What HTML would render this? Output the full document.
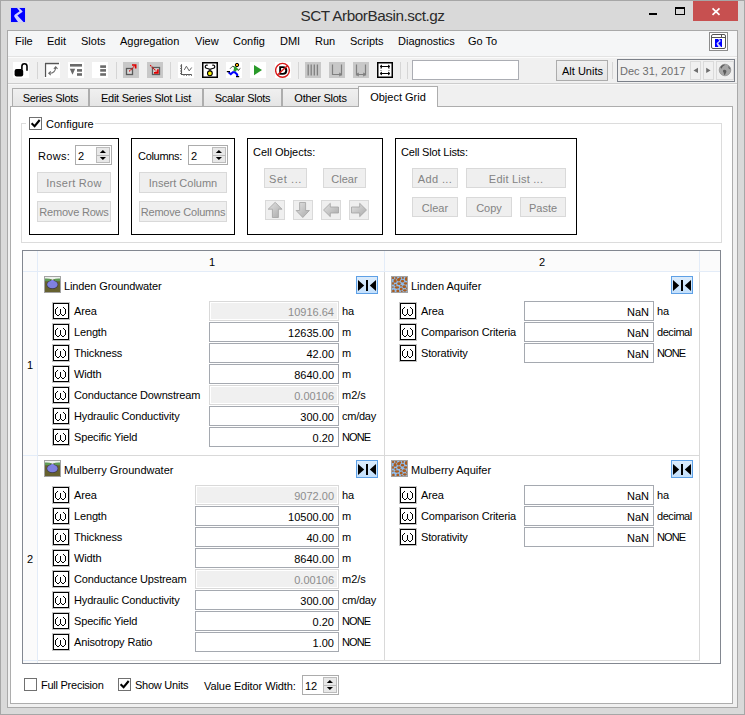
<!DOCTYPE html>
<html><head><meta charset="utf-8"><style>
html,body{margin:0;padding:0}
body{width:745px;height:715px;position:relative;overflow:hidden;font-family:"Liberation Sans", sans-serif;font-size:11px}
.t{position:absolute;white-space:pre;line-height:13px;font-size:11px}
.g{letter-spacing:-0.15px}
</style></head><body>
<div style="position:absolute;left:0px;top:0px;width:745px;height:715px;box-sizing:border-box;background:#d9d9d9;border:1px solid #a6a6a6"></div>
<svg style="position:absolute;left:10px;top:7px" width="16" height="16" viewBox="-1 -1 16 16">
<rect x="-0.5" y="-0.5" width="15" height="15" fill="#c8c8f0"/><rect width="14" height="14" fill="#0000ff"/>
<path d="M6 0 L8.2 0 L11.5 3.2 Q11.8 3.8 11 4.3 L6.4 7.6 L12.5 14 L7 14 L3.3 8.8 Q2.8 7.5 4 6.5 L8.6 3.2 Z" fill="#d2d2ff"/>
</svg>
<div class="t" style="left:0;width:745px;text-align:center;top:5.9px;font-size:15.3px;line-height:19px;color:#2b2b2b;letter-spacing:-0.45px;padding-left:0px">SCT ArborBasin.sct.gz</div>
<div style="position:absolute;left:649px;top:13px;width:8px;height:2px;box-sizing:border-box;background:#000"></div>
<div style="position:absolute;left:675px;top:7px;width:10px;height:8px;box-sizing:border-box;border:1px solid #000;border-top-width:2px"></div>
<div style="position:absolute;left:693px;top:1px;width:45px;height:20px;box-sizing:border-box;background:#c75050"></div>
<svg style="position:absolute;left:711px;top:7px" width="10" height="9" viewBox="0 0 10 9">
<path d="M1.5 1.3 L8.5 7.8 M8.5 1.3 L1.5 7.8" stroke="#fff" stroke-width="1.7"/></svg>
<div style="position:absolute;left:7px;top:30px;width:731px;height:678px;box-sizing:border-box;background:#f0f0f0;border:1px solid #a9a9a9"></div>
<div style="position:absolute;left:8px;top:31px;width:729px;height:25px;box-sizing:border-box;background:#f5f6f7"></div>
<div style="position:absolute;left:8px;top:56px;width:729px;height:1px;box-sizing:border-box;background:#e3e3e3"></div>
<div class="t " style="left:15px;top:35px;color:#000;">File</div>
<div class="t " style="left:47px;top:35px;color:#000;">Edit</div>
<div class="t " style="left:81px;top:35px;color:#000;">Slots</div>
<div class="t " style="left:120px;top:35px;color:#000;">Aggregation</div>
<div class="t " style="left:195px;top:35px;color:#000;">View</div>
<div class="t " style="left:233px;top:35px;color:#000;">Config</div>
<div class="t " style="left:280px;top:35px;color:#000;">DMI</div>
<div class="t " style="left:315px;top:35px;color:#000;">Run</div>
<div class="t " style="left:350px;top:35px;color:#000;">Scripts</div>
<div class="t " style="left:398px;top:35px;color:#000;">Diagnostics</div>
<div class="t " style="left:468px;top:35px;color:#000;">Go To</div>
<div style="position:absolute;left:709px;top:32px;width:19px;height:19px;box-sizing:border-box;background:#fff;border:1px solid #8c8c8c"></div>
<div style="position:absolute;left:711px;top:34px;width:15px;height:15px;box-sizing:border-box;background:#fff;border:1px solid #555;border-radius:2px"></div>
<div style="position:absolute;left:712px;top:37px;width:13px;height:1px;box-sizing:border-box;background:#555"></div>
<div style="position:absolute;left:721px;top:35px;width:1px;height:2px;box-sizing:border-box;background:#555"></div>
<svg style="position:absolute;left:715px;top:39px" width="7" height="8" viewBox="0 0 14 14" preserveAspectRatio="none"><rect width="14" height="14" fill="#0000ff"/><path d="M6 0 L8.2 0 L11.5 3.2 Q11.8 3.8 11 4.3 L6.4 7.6 L12.5 14 L7 14 L3.3 8.8 Q2.8 7.5 4 6.5 L8.6 3.2 Z" fill="#d2d2ff"/></svg>
<div style="position:absolute;left:8px;top:57px;width:729px;height:1px;box-sizing:border-box;background:#fbfbfb"></div>
<div style="position:absolute;left:8px;top:83px;width:729px;height:1px;box-sizing:border-box;background:#cdcdcd"></div>
<div style="position:absolute;left:8px;top:84px;width:729px;height:1px;box-sizing:border-box;background:#f8f8f8"></div>
<div style="position:absolute;left:13px;top:62px;width:16px;height:16px;box-sizing:border-box;background:#fff"></div>
<svg style="position:absolute;left:13px;top:62px" width="16" height="16" viewBox="0 0 16 16">
<rect x="1.6" y="7" width="8.6" height="7.6" rx="2" fill="#000"/>
<path d="M8.9 7.5 V4.3 A2.55 2.55 0 0 1 14 4.3 V8.8" stroke="#000" stroke-width="1.6" fill="none"/></svg>
<div style="position:absolute;left:37px;top:62px;width:1px;height:17px;box-sizing:border-box;background:#d5d5d5"></div>
<div style="position:absolute;left:116px;top:62px;width:1px;height:17px;box-sizing:border-box;background:#d5d5d5"></div>
<div style="position:absolute;left:170px;top:62px;width:1px;height:17px;box-sizing:border-box;background:#d5d5d5"></div>
<div style="position:absolute;left:298px;top:62px;width:1px;height:17px;box-sizing:border-box;background:#d5d5d5"></div>
<div style="position:absolute;left:400px;top:62px;width:1px;height:17px;box-sizing:border-box;background:#d5d5d5"></div>
<div style="position:absolute;left:407px;top:62px;width:1px;height:17px;box-sizing:border-box;background:#d5d5d5"></div>
<div style="position:absolute;left:612px;top:62px;width:1px;height:17px;box-sizing:border-box;background:#d5d5d5"></div>
<div style="position:absolute;left:44px;top:62px;width:16px;height:16px;box-sizing:border-box;background:#fff"></div>
<svg style="position:absolute;left:44px;top:62px" width="16" height="16" viewBox="0 0 16 16">
<path d="M1.5 15 V1.5 H15" stroke="#555" stroke-width="1.3" fill="none"/>
<path d="M5 11.3 Q11.5 11.5 11.7 5" stroke="#6a6a6a" stroke-width="1.1" fill="none"/>
<path d="M6.8 9.5 L4.8 11.3 L6.8 13.1 M9.9 6.8 L11.7 4.8 L13.5 6.8" stroke="#6a6a6a" stroke-width="1.1" fill="none"/></svg>
<div style="position:absolute;left:68px;top:62px;width:16px;height:16px;box-sizing:border-box;background:#fff"></div>
<svg style="position:absolute;left:68px;top:62px" width="16" height="16" viewBox="0 0 16 16">
<rect x="2" y="2" width="12" height="2.6" fill="#6a6a6a"/><path d="M1.8 6.7 H7.2 L4.5 12.8 Z" fill="#6a6a6a"/>
<rect x="9" y="7.1" width="5" height="2.6" fill="#6a6a6a"/><rect x="9" y="11.2" width="5" height="2.6" fill="#6a6a6a"/></svg>
<div style="position:absolute;left:92px;top:62px;width:16px;height:16px;box-sizing:border-box;background:#fff"></div>
<svg style="position:absolute;left:92px;top:62px" width="16" height="16" viewBox="0 0 16 16">
<rect x="8.2" y="3.3" width="5.8" height="2.6" fill="#6a6a6a"/><rect x="8.2" y="7.1" width="5.8" height="2.6" fill="#6a6a6a"/><rect x="8.2" y="11.2" width="5.8" height="2.6" fill="#6a6a6a"/></svg>
<div style="position:absolute;left:123px;top:62px;width:16px;height:16px;box-sizing:border-box;background:#c8c8c8"></div>
<svg style="position:absolute;left:123px;top:62px" width="16" height="16" viewBox="0 0 16 16">
<rect x="3.5" y="6.5" width="6" height="6" stroke="#5a5a5a" stroke-width="1.3" fill="#d8d8d8"/>
<path d="M6.3 9.4 L12.3 3.4" stroke="#e00000" stroke-width="1.1" stroke-dasharray="1.3 0.6" fill="none"/>
<path d="M9 3 H12.7 V6.6" stroke="#e00000" stroke-width="1.6" fill="none"/></svg>
<div style="position:absolute;left:147px;top:62px;width:16px;height:16px;box-sizing:border-box;background:#c8c8c8"></div>
<svg style="position:absolute;left:147px;top:62px" width="16" height="16" viewBox="0 0 16 16">
<rect x="5.5" y="5.5" width="7" height="7" stroke="#5a5a5a" stroke-width="1.3" fill="#d8d8d8"/>
<path d="M3.2 3.2 L10.4 10.4" stroke="#e00000" stroke-width="1.1" stroke-dasharray="1.3 0.6" fill="none"/>
<path d="M7 10.9 H10.9 V7.3" stroke="#e00000" stroke-width="1.6" fill="none"/></svg>
<div style="position:absolute;left:178px;top:62px;width:16px;height:16px;box-sizing:border-box;background:#fff"></div>
<svg style="position:absolute;left:178px;top:62px" width="16" height="16" viewBox="0 0 16 16">
<path d="M3.5 2.3 V12.5 H13.7" stroke="#555" stroke-width="1.1" fill="none"/>
<path d="M2 4 H3.5 M2 6.5 H3.5 M2 9 H3.5 M2 11.5 H3.5 M6 12.5 V14 M8.5 12.5 V14 M11 12.5 V14 M13.5 12.5 V14" stroke="#777" stroke-width="1"/>
<path d="M6.3 7.9 L8.4 4.2 L11.2 8.9 L13.7 5.5" stroke="#666" stroke-width="1" fill="none"/></svg>
<svg style="position:absolute;left:202px;top:62px" width="16" height="16" viewBox="0 0 16 16">
<rect x="0.75" y="0.75" width="14.5" height="14.5" stroke="#000" stroke-width="1.5" fill="#fff"/>
<path d="M5.5 6.5 Q3 6.3 3.3 4.3 Q3.8 2.6 5.8 3.3 M10.5 6.5 Q13 6.3 12.7 4.3 Q12.2 2.6 10.2 3.3 M5.5 6.5 L8 7.4 L10.5 6.5 M8 7.4 V9" stroke="#000" stroke-width="1.2" fill="none"/>
<circle cx="7.9" cy="11.3" r="2.4" fill="#f5f000" stroke="#000" stroke-width="1.1"/></svg>
<svg style="position:absolute;left:226px;top:62px" width="16" height="16" viewBox="0 0 16 16">
<rect width="16" height="16" fill="#fff"/>
<path d="M4.3 6.5 L6.5 4.3 L8 4.6" stroke="#000" stroke-width="1" fill="none" stroke-dasharray="1.2 0.4"/>
<path d="M12 8.6 L14.6 6.2" stroke="#000" stroke-width="1" fill="none" stroke-dasharray="1.2 0.4"/>
<path d="M7.4 4.2 L9.6 4.6 L12.6 7.6 L11.6 8.4 L10.6 7.8 L10.2 9.4 L7.2 9.4 L8 6.6 Z" fill="#2a9a2a"/>
<path d="M2.6 10.2 L4.8 12.2 L6.8 10.2 L8.8 10.2 L11.2 12.4 L11.2 14.3" stroke="#0000ff" stroke-width="2" fill="none"/>
<path d="M0.8 9.6 H4 M10 14.7 H13.2" stroke="#000" stroke-width="1.3"/>
<circle cx="11" cy="3" r="1.7" fill="#f5a500" stroke="#000" stroke-width="1"/></svg>
<div style="position:absolute;left:250px;top:62px;width:16px;height:16px;box-sizing:border-box;background:#fff"></div>
<svg style="position:absolute;left:250px;top:62px" width="16" height="16" viewBox="0 0 16 16">
<path d="M4 3 L12 8 L4 13.2 Z" fill="#2a9a2a"/></svg>
<div style="position:absolute;left:275px;top:62px;width:16px;height:16px;box-sizing:border-box;background:#fff"></div>
<svg style="position:absolute;left:275px;top:62px" width="16" height="16" viewBox="0 0 16 16">
<path d="M4.2 4.2 H8 Q12.3 4.2 12.3 8.5 Q12.3 12.7 8 12.7 H4.2 Z M6.1 6 V10.9 H8 Q10.3 10.9 10.3 8.5 Q10.3 6 8 6 Z" fill="#000" fill-rule="evenodd"/>
<circle cx="7.5" cy="8.3" r="6.9" stroke="#d81818" stroke-width="1.4" fill="none"/>
<path d="M2.4 13 L12.6 3.6" stroke="#d81818" stroke-width="1.4"/></svg>
<div style="position:absolute;left:305px;top:62px;width:16px;height:16px;box-sizing:border-box;background:#c8c8c8"></div>
<svg style="position:absolute;left:305px;top:62px" width="16" height="16" viewBox="0 0 16 16">
<path d="M3.2 2.5 V13.5 M6.2 2.5 V13.5 M9.3 2.5 V13.5 M12.4 2.5 V13.5" stroke="#808080" stroke-width="1.3"/></svg>
<div style="position:absolute;left:329px;top:62px;width:16px;height:16px;box-sizing:border-box;background:#c8c8c8"></div>
<svg style="position:absolute;left:329px;top:62px" width="16" height="16" viewBox="0 0 16 16">
<path d="M3.5 2.5 V12.5 H12 M12.5 2.5 V13.5 M10.3 10.8 L12 12.5 L10.3 14.2" stroke="#808080" stroke-width="1.2" fill="none"/></svg>
<div style="position:absolute;left:353px;top:62px;width:16px;height:16px;box-sizing:border-box;background:#c8c8c8"></div>
<svg style="position:absolute;left:353px;top:62px" width="16" height="16" viewBox="0 0 16 16">
<path d="M3.5 2.5 V13.5 M12.5 2.5 V13.5 M4 12.5 H12 M5.7 10.8 L4 12.5 L5.7 14.2 M10.3 10.8 L12 12.5 L10.3 14.2" stroke="#808080" stroke-width="1.2" fill="none"/></svg>
<svg style="position:absolute;left:377px;top:62px" width="16" height="16" viewBox="0 0 16 16">
<rect x="0.75" y="0.75" width="14.5" height="14.5" stroke="#000" stroke-width="1.5" fill="#fff"/>
<path d="M3.5 4.5 H12.5 M3.5 11.5 H12.5" stroke="#000" stroke-width="1"/>
<path d="M5 3 L3 4.5 L5 6 M11 3 L13 4.5 L11 6 M5 10 L3 11.5 L5 13 M11 10 L13 11.5 L11 13" stroke="#000" stroke-width="1" fill="none"/>
<path d="M4 6 V10 M12 6 V10" stroke="#000" stroke-width="0.6" stroke-dasharray="1 1"/></svg>
<div style="position:absolute;left:412px;top:60px;width:107px;height:20px;box-sizing:border-box;background:#fff;border:1px solid #abadb3"></div>
<div style="position:absolute;left:556px;top:60px;width:52px;height:21px;box-sizing:border-box;background:linear-gradient(#f0f0f0,#e5e5e5);border:1px solid #acacac"></div>
<div class="t " style="left:562px;top:65px;color:#000;">Alt Units</div>
<div style="position:absolute;left:617px;top:59px;width:118px;height:23px;box-sizing:border-box;background:#f0f0f0;border:1px solid #7b8089"></div>
<div class="t " style="left:620px;top:65px;color:#6d6d6d;">Dec 31, 2017</div>
<div style="position:absolute;left:690px;top:61px;width:11px;height:19px;box-sizing:border-box;background:#f0f0f0;border:1px solid #dadada"></div>
<div style="position:absolute;left:703px;top:61px;width:11px;height:19px;box-sizing:border-box;background:#f0f0f0;border:1px solid #dadada"></div>
<svg style="position:absolute;left:690px;top:61px" width="24" height="19"><path d="M8 6.8 L3.5 9.4 L8 12 Z" fill="#6e6e6e"/><path d="M16.2 6.8 L20.6 9.4 L16.2 12 Z" fill="#6e6e6e"/></svg>
<div style="position:absolute;left:716px;top:61px;width:18px;height:19px;box-sizing:border-box;background:#f0f0f0;border:1px solid #dadada"></div>
<svg style="position:absolute;left:717px;top:62px" width="16" height="17"><circle cx="8" cy="8" r="5.8" fill="#a6a6a6"/><path d="M3.3 5.5 Q5 2.4 8.3 2.3 Q7.5 3.8 6 4.2 Q5 5.5 4.5 6.8 Z" fill="#5c5c5c"/><path d="M6.2 8 Q8 7.3 9.2 8.5 Q9.8 10 8.8 11 Q8.2 12.5 7.6 13.6 Q6.8 12 6.6 10.5 Q5.6 9.5 6.2 8 Z" fill="#5c5c5c"/><path d="M11 4 Q13.2 5.2 13.6 7.6 Q12.4 7 11.6 6.2 Z" fill="#666"/><circle cx="8" cy="8" r="5.8" fill="none" stroke="#8c8c8c" stroke-width="0.7"/></svg>
<div style="position:absolute;left:10px;top:106px;width:723px;height:598px;box-sizing:border-box;background:#fff;border:1px solid #adadad"></div>
<div style="position:absolute;left:12px;top:88px;width:77px;height:19px;box-sizing:border-box;background:linear-gradient(#f0f0f0,#e5e5e5);border:1px solid #adadad"></div>
<div class="t" style="left:12px;width:77px;text-align:center;top:92px;letter-spacing:-0.25px">Series Slots</div>
<div style="position:absolute;left:89px;top:88px;width:114px;height:19px;box-sizing:border-box;background:linear-gradient(#f0f0f0,#e5e5e5);border:1px solid #adadad"></div>
<div class="t" style="left:89px;width:114px;text-align:center;top:92px;letter-spacing:-0.25px">Edit Series Slot List</div>
<div style="position:absolute;left:203px;top:88px;width:79px;height:19px;box-sizing:border-box;background:linear-gradient(#f0f0f0,#e5e5e5);border:1px solid #adadad"></div>
<div class="t" style="left:203px;width:79px;text-align:center;top:92px;letter-spacing:-0.25px">Scalar Slots</div>
<div style="position:absolute;left:282px;top:88px;width:77px;height:19px;box-sizing:border-box;background:linear-gradient(#f0f0f0,#e5e5e5);border:1px solid #adadad"></div>
<div class="t" style="left:282px;width:77px;text-align:center;top:92px;letter-spacing:-0.25px">Other Slots</div>
<div style="position:absolute;left:358px;top:86px;width:80px;height:21px;box-sizing:border-box;background:#fff;border:1px solid #adadad;border-bottom:none"></div>
<div class="t" style="left:358px;width:80px;text-align:center;top:91px">Object Grid</div>
<div style="position:absolute;left:21px;top:123px;width:701px;height:120px;box-sizing:border-box;border:1px solid #dcdcdc"></div>
<div style="position:absolute;left:26px;top:116px;width:69px;height:15px;box-sizing:border-box;background:#fff"></div>
<div style="position:absolute;left:29px;top:117px;width:13px;height:13px;box-sizing:border-box;background:#fff;border:1px solid #707070"></div>
<svg style="position:absolute;left:29px;top:117px" width="13" height="13" viewBox="0 0 13 13"><path d="M2.6 6.2 L5.6 9.2 L10.7 3" stroke="#000" stroke-width="2.1" fill="none"/></svg>
<div class="t " style="left:46px;top:118px;color:#000;">Configure</div>
<div style="position:absolute;left:29px;top:138px;width:90px;height:97px;box-sizing:border-box;border:1px solid #000"></div>
<div style="position:absolute;left:131px;top:138px;width:104px;height:97px;box-sizing:border-box;border:1px solid #000"></div>
<div style="position:absolute;left:247px;top:138px;width:136px;height:97px;box-sizing:border-box;border:1px solid #000"></div>
<div style="position:absolute;left:395px;top:138px;width:182px;height:97px;box-sizing:border-box;border:1px solid #000"></div>
<div class="t " style="left:38px;top:150px;color:#000;letter-spacing:0.3px">Rows:</div>
<div style="position:absolute;left:75px;top:145px;width:37px;height:20px;box-sizing:border-box;background:#fff;border:1px solid #acacac"></div>
<div class="t " style="left:78px;top:150px;color:#000;">2</div>
<div style="position:absolute;left:96px;top:147px;width:14px;height:9px;box-sizing:border-box;background:#e8e8e8;border:1px solid #bcbcbc"></div>
<div style="position:absolute;left:96px;top:155px;width:14px;height:8px;box-sizing:border-box;background:#e8e8e8;border:1px solid #bcbcbc"></div>
<svg style="position:absolute;left:96px;top:145px" width="14" height="20"><path d="M3.8 7.9 L6.9 5 L10 7.9 Z M3.8 12 L10 12 L6.9 15 Z" fill="#000"/></svg>
<div style="position:absolute;left:37px;top:172px;width:74px;height:21px;box-sizing:border-box;background:#efefef;border:1px solid #d9d9d9"></div>
<div class="t" style="left:37px;width:74px;text-align:center;top:177px;color:#838383;letter-spacing:0.3px">Insert Row</div>
<div style="position:absolute;left:37px;top:201px;width:74px;height:21px;box-sizing:border-box;background:#efefef;border:1px solid #d9d9d9"></div>
<div class="t" style="left:37px;width:74px;text-align:center;top:206px;color:#838383;letter-spacing:-0.2px">Remove Rows</div>
<div class="t " style="left:138px;top:150px;color:#000;letter-spacing:-0.3px">Columns:</div>
<div style="position:absolute;left:188px;top:145px;width:40px;height:20px;box-sizing:border-box;background:#fff;border:1px solid #acacac"></div>
<div class="t " style="left:191px;top:150px;color:#000;">2</div>
<div style="position:absolute;left:212px;top:147px;width:14px;height:9px;box-sizing:border-box;background:#e8e8e8;border:1px solid #bcbcbc"></div>
<div style="position:absolute;left:212px;top:155px;width:14px;height:8px;box-sizing:border-box;background:#e8e8e8;border:1px solid #bcbcbc"></div>
<svg style="position:absolute;left:212px;top:145px" width="14" height="20"><path d="M3.8 7.9 L6.9 5 L10 7.9 Z M3.8 12 L10 12 L6.9 15 Z" fill="#000"/></svg>
<div style="position:absolute;left:139px;top:172px;width:88px;height:21px;box-sizing:border-box;background:#efefef;border:1px solid #d9d9d9"></div>
<div class="t" style="left:139px;width:88px;text-align:center;top:177px;color:#838383;letter-spacing:0px">Insert Column</div>
<div style="position:absolute;left:139px;top:201px;width:88px;height:21px;box-sizing:border-box;background:#efefef;border:1px solid #d9d9d9"></div>
<div class="t" style="left:139px;width:88px;text-align:center;top:206px;color:#838383;letter-spacing:-0.21px">Remove Columns</div>
<div class="t " style="left:253px;top:146px;color:#000;">Cell Objects:</div>
<div style="position:absolute;left:264px;top:168px;width:43px;height:20px;box-sizing:border-box;background:#efefef;border:1px solid #d9d9d9"></div>
<div class="t" style="left:264px;width:43px;text-align:center;top:173px;color:#838383;letter-spacing:0.6px">Set ...</div>
<div style="position:absolute;left:323px;top:168px;width:43px;height:20px;box-sizing:border-box;background:#efefef;border:1px solid #d9d9d9"></div>
<div class="t" style="left:323px;width:43px;text-align:center;top:173px;color:#838383;letter-spacing:0px">Clear</div>
<div style="position:absolute;left:265px;top:200px;width:20px;height:20px;box-sizing:border-box;background:#efefef;border:1px solid #d9d9d9"></div>
<div style="position:absolute;left:293px;top:200px;width:20px;height:20px;box-sizing:border-box;background:#efefef;border:1px solid #d9d9d9"></div>
<div style="position:absolute;left:321px;top:200px;width:20px;height:20px;box-sizing:border-box;background:#efefef;border:1px solid #d9d9d9"></div>
<div style="position:absolute;left:349px;top:200px;width:20px;height:20px;box-sizing:border-box;background:#efefef;border:1px solid #d9d9d9"></div>
<svg style="position:absolute;left:265px;top:200px" width="104" height="20">
<defs><linearGradient id="ag" x1="0" y1="0" x2="1" y2="1"><stop offset="0" stop-color="#e2e2e2"/><stop offset="1" stop-color="#aaaaaa"/></linearGradient></defs>
<g fill="url(#ag)" stroke="#a2a2a2" stroke-width="0.8">
<path d="M10.2 2.3 L17 9.2 L13.4 9.2 L13.4 17.5 L7.4 17.5 L7.4 9.2 L3.2 9.2 Z"/>
<path transform="translate(28,0)" d="M9.8 17.5 L16.4 10.5 L12.6 10.5 L12.6 2.5 L6.6 2.5 L6.6 10.5 L3.1 10.5 Z"/>
<path transform="translate(56,0)" d="M2.5 10 L9.3 3.3 L9.3 7 L17.5 7 L17.5 13 L9.3 13 L9.3 16.7 Z"/>
<path transform="translate(84,0)" d="M17.5 10 L10.7 3.3 L10.7 7 L2.5 7 L2.5 13 L10.7 13 L10.7 16.7 Z"/>
</g></svg>
<div class="t " style="left:401px;top:146px;color:#000;letter-spacing:-0.18px">Cell Slot Lists:</div>
<div style="position:absolute;left:412px;top:168px;width:46px;height:20px;box-sizing:border-box;background:#efefef;border:1px solid #d9d9d9"></div>
<div class="t" style="left:412px;width:46px;text-align:center;top:173px;color:#838383;letter-spacing:0.4px">Add ...</div>
<div style="position:absolute;left:466px;top:168px;width:100px;height:20px;box-sizing:border-box;background:#efefef;border:1px solid #d9d9d9"></div>
<div class="t" style="left:466px;width:100px;text-align:center;top:173px;color:#838383;letter-spacing:0.23px">Edit List ...</div>
<div style="position:absolute;left:412px;top:197px;width:46px;height:20px;box-sizing:border-box;background:#efefef;border:1px solid #d9d9d9"></div>
<div class="t" style="left:412px;width:46px;text-align:center;top:202px;color:#838383;letter-spacing:0px">Clear</div>
<div style="position:absolute;left:466px;top:197px;width:46px;height:20px;box-sizing:border-box;background:#efefef;border:1px solid #d9d9d9"></div>
<div class="t" style="left:466px;width:46px;text-align:center;top:202px;color:#838383;letter-spacing:0px">Copy</div>
<div style="position:absolute;left:520px;top:197px;width:46px;height:20px;box-sizing:border-box;background:#efefef;border:1px solid #d9d9d9"></div>
<div class="t" style="left:520px;width:46px;text-align:center;top:202px;color:#838383;letter-spacing:0px">Paste</div>
<div style="position:absolute;left:22px;top:250px;width:699px;height:414px;box-sizing:border-box;background:#fff;border:1px solid #828790"></div>
<div style="position:absolute;left:23px;top:251px;width:697px;height:20px;box-sizing:border-box;background:#fbfbfb"></div>
<div style="position:absolute;left:23px;top:271px;width:697px;height:1px;box-sizing:border-box;background:#e3ecf8"></div>
<div style="position:absolute;left:23px;top:272px;width:14px;height:391px;box-sizing:border-box;background:#fbfbfb"></div>
<div style="position:absolute;left:37px;top:251px;width:1px;height:412px;box-sizing:border-box;background:#e3ecf8"></div>
<div class="t " style="left:209px;top:256px;color:#000;">1</div>
<div class="t " style="left:539px;top:256px;color:#000;">2</div>
<div style="position:absolute;left:384px;top:251px;width:1px;height:20px;box-sizing:border-box;background:#e3ecf8"></div>
<div style="position:absolute;left:384px;top:272px;width:1px;height:388px;box-sizing:border-box;background:#d9d9d9"></div>
<div style="position:absolute;left:699px;top:251px;width:1px;height:20px;box-sizing:border-box;background:#e3ecf8"></div>
<div style="position:absolute;left:699px;top:272px;width:1px;height:388px;box-sizing:border-box;background:#d9d9d9"></div>
<div style="position:absolute;left:23px;top:455px;width:14px;height:1px;box-sizing:border-box;background:#e3ecf8"></div>
<div style="position:absolute;left:38px;top:455px;width:662px;height:1px;box-sizing:border-box;background:#d9d9d9"></div>
<div style="position:absolute;left:23px;top:660px;width:14px;height:1px;box-sizing:border-box;background:#e3ecf8"></div>
<div style="position:absolute;left:38px;top:660px;width:662px;height:1px;box-sizing:border-box;background:#d9d9d9"></div>
<div class="t " style="left:27px;top:359px;color:#000;">1</div>
<div class="t " style="left:27px;top:553px;color:#000;">2</div>
<svg style="position:absolute;left:44px;top:276px" width="17" height="17" viewBox="0 0 17 17">
<rect x="0.5" y="0.5" width="16" height="16" fill="#66612f" stroke="#a3a3a3"/>
<rect x="1" y="1" width="15" height="2" fill="#eef2ee"/>
<path d="M1 2.6 Q5 2.2 8.5 4 Q12 2.2 16 2.6 V5.2 H1 Z" fill="#5f9a58"/>
<path d="M7.7 3.2 H9.3 L10 5 H7 Z" fill="#eef2ee"/>
<ellipse cx="8.4" cy="8.6" rx="5.8" ry="4.3" fill="#3d3a4a"/>
<ellipse cx="8.4" cy="8.5" rx="5.2" ry="3.8" fill="#7f80df"/>
<path d="M7.3 4.6 L8.4 4 L9.5 4.6 L10 6 H6.8 Z" fill="#7f80ef"/></svg>
<div class="t " style="left:64px;top:280px;color:#000;letter-spacing:-0.12px">Linden Groundwater</div>
<div style="position:absolute;left:356px;top:276px;width:22px;height:18px;box-sizing:border-box;background:linear-gradient(#dcecfc,#c4e0fc);border:1px solid #5ea0e6"></div>
<svg style="position:absolute;left:356px;top:276px" width="22" height="18" viewBox="0 0 22 18">
<path d="M2 4 L8.2 9.5 L2 15 Z M20 4 L13.8 9.5 L20 15 Z" fill="#000"/><rect x="10" y="4" width="2" height="11" fill="#000"/></svg>
<svg style="position:absolute;left:52px;top:302px" width="18" height="18" viewBox="0 0 18 18" shape-rendering="crispEdges">
<rect x="0.5" y="0.5" width="17" height="17" fill="none" stroke="#c4c4c4"/>
<rect x="1.5" y="1.5" width="15" height="15" fill="#fff" stroke="#000"/>
<path d="M5 5h1v1h-1zM4 6h1v1h-1zM3 7h1v1h-1zM3 8h1v1h-1zM3 9h1v1h-1zM3 10h1v1h-1zM3 11h1v1h-1zM4 12h1v1h-1zM5 13h1v1h-1zM6 13h1v1h-1zM7 12h1v1h-1zM8 7h1v1h-1zM8 8h1v1h-1zM8 9h1v1h-1zM8 10h1v1h-1zM8 11h1v1h-1zM9 12h1v1h-1zM10 13h1v1h-1zM11 13h1v1h-1zM12 12h1v1h-1zM13 7h1v1h-1zM13 8h1v1h-1zM13 9h1v1h-1zM13 10h1v1h-1zM13 11h1v1h-1zM12 6h1v1h-1zM11 5h1v1h-1z" fill="#000"/></svg>
<div class="t g" style="left:74px;top:305px;color:#000;">Area</div>
<div style="position:absolute;left:209px;top:301px;width:130px;height:20px;box-sizing:border-box;background:#f0f0f0;border:1px solid #d9d9d9;box-shadow:inset 0 0 0 1px #fff"></div>
<div class="t" style="right:411px;top:306px;color:#8d8d8d;">10916.64</div>
<div class="t " style="left:342px;top:305px;color:#000;">ha</div>
<svg style="position:absolute;left:52px;top:323px" width="18" height="18" viewBox="0 0 18 18" shape-rendering="crispEdges">
<rect x="0.5" y="0.5" width="17" height="17" fill="none" stroke="#c4c4c4"/>
<rect x="1.5" y="1.5" width="15" height="15" fill="#fff" stroke="#000"/>
<path d="M5 5h1v1h-1zM4 6h1v1h-1zM3 7h1v1h-1zM3 8h1v1h-1zM3 9h1v1h-1zM3 10h1v1h-1zM3 11h1v1h-1zM4 12h1v1h-1zM5 13h1v1h-1zM6 13h1v1h-1zM7 12h1v1h-1zM8 7h1v1h-1zM8 8h1v1h-1zM8 9h1v1h-1zM8 10h1v1h-1zM8 11h1v1h-1zM9 12h1v1h-1zM10 13h1v1h-1zM11 13h1v1h-1zM12 12h1v1h-1zM13 7h1v1h-1zM13 8h1v1h-1zM13 9h1v1h-1zM13 10h1v1h-1zM13 11h1v1h-1zM12 6h1v1h-1zM11 5h1v1h-1z" fill="#000"/></svg>
<div class="t g" style="left:74px;top:326px;color:#000;">Length</div>
<div style="position:absolute;left:209px;top:322px;width:130px;height:20px;box-sizing:border-box;background:#fff;border:1px solid #a5a9b0"></div>
<div class="t" style="right:411px;top:327px;color:#000;">12635.00</div>
<div class="t " style="left:342px;top:326px;color:#000;">m</div>
<svg style="position:absolute;left:52px;top:344px" width="18" height="18" viewBox="0 0 18 18" shape-rendering="crispEdges">
<rect x="0.5" y="0.5" width="17" height="17" fill="none" stroke="#c4c4c4"/>
<rect x="1.5" y="1.5" width="15" height="15" fill="#fff" stroke="#000"/>
<path d="M5 5h1v1h-1zM4 6h1v1h-1zM3 7h1v1h-1zM3 8h1v1h-1zM3 9h1v1h-1zM3 10h1v1h-1zM3 11h1v1h-1zM4 12h1v1h-1zM5 13h1v1h-1zM6 13h1v1h-1zM7 12h1v1h-1zM8 7h1v1h-1zM8 8h1v1h-1zM8 9h1v1h-1zM8 10h1v1h-1zM8 11h1v1h-1zM9 12h1v1h-1zM10 13h1v1h-1zM11 13h1v1h-1zM12 12h1v1h-1zM13 7h1v1h-1zM13 8h1v1h-1zM13 9h1v1h-1zM13 10h1v1h-1zM13 11h1v1h-1zM12 6h1v1h-1zM11 5h1v1h-1z" fill="#000"/></svg>
<div class="t g" style="left:74px;top:347px;color:#000;">Thickness</div>
<div style="position:absolute;left:209px;top:343px;width:130px;height:20px;box-sizing:border-box;background:#fff;border:1px solid #a5a9b0"></div>
<div class="t" style="right:411px;top:348px;color:#000;">42.00</div>
<div class="t " style="left:342px;top:347px;color:#000;">m</div>
<svg style="position:absolute;left:52px;top:365px" width="18" height="18" viewBox="0 0 18 18" shape-rendering="crispEdges">
<rect x="0.5" y="0.5" width="17" height="17" fill="none" stroke="#c4c4c4"/>
<rect x="1.5" y="1.5" width="15" height="15" fill="#fff" stroke="#000"/>
<path d="M5 5h1v1h-1zM4 6h1v1h-1zM3 7h1v1h-1zM3 8h1v1h-1zM3 9h1v1h-1zM3 10h1v1h-1zM3 11h1v1h-1zM4 12h1v1h-1zM5 13h1v1h-1zM6 13h1v1h-1zM7 12h1v1h-1zM8 7h1v1h-1zM8 8h1v1h-1zM8 9h1v1h-1zM8 10h1v1h-1zM8 11h1v1h-1zM9 12h1v1h-1zM10 13h1v1h-1zM11 13h1v1h-1zM12 12h1v1h-1zM13 7h1v1h-1zM13 8h1v1h-1zM13 9h1v1h-1zM13 10h1v1h-1zM13 11h1v1h-1zM12 6h1v1h-1zM11 5h1v1h-1z" fill="#000"/></svg>
<div class="t g" style="left:74px;top:368px;color:#000;">Width</div>
<div style="position:absolute;left:209px;top:364px;width:130px;height:20px;box-sizing:border-box;background:#fff;border:1px solid #a5a9b0"></div>
<div class="t" style="right:411px;top:369px;color:#000;">8640.00</div>
<div class="t " style="left:342px;top:368px;color:#000;">m</div>
<svg style="position:absolute;left:52px;top:386px" width="18" height="18" viewBox="0 0 18 18" shape-rendering="crispEdges">
<rect x="0.5" y="0.5" width="17" height="17" fill="none" stroke="#c4c4c4"/>
<rect x="1.5" y="1.5" width="15" height="15" fill="#fff" stroke="#000"/>
<path d="M5 5h1v1h-1zM4 6h1v1h-1zM3 7h1v1h-1zM3 8h1v1h-1zM3 9h1v1h-1zM3 10h1v1h-1zM3 11h1v1h-1zM4 12h1v1h-1zM5 13h1v1h-1zM6 13h1v1h-1zM7 12h1v1h-1zM8 7h1v1h-1zM8 8h1v1h-1zM8 9h1v1h-1zM8 10h1v1h-1zM8 11h1v1h-1zM9 12h1v1h-1zM10 13h1v1h-1zM11 13h1v1h-1zM12 12h1v1h-1zM13 7h1v1h-1zM13 8h1v1h-1zM13 9h1v1h-1zM13 10h1v1h-1zM13 11h1v1h-1zM12 6h1v1h-1zM11 5h1v1h-1z" fill="#000"/></svg>
<div class="t g" style="left:74px;top:389px;color:#000;">Conductance Downstream</div>
<div style="position:absolute;left:209px;top:385px;width:130px;height:20px;box-sizing:border-box;background:#f0f0f0;border:1px solid #d9d9d9;box-shadow:inset 0 0 0 1px #fff"></div>
<div class="t" style="right:411px;top:390px;color:#8d8d8d;">0.00106</div>
<div class="t " style="left:342px;top:389px;color:#000;">m2/s</div>
<svg style="position:absolute;left:52px;top:407px" width="18" height="18" viewBox="0 0 18 18" shape-rendering="crispEdges">
<rect x="0.5" y="0.5" width="17" height="17" fill="none" stroke="#c4c4c4"/>
<rect x="1.5" y="1.5" width="15" height="15" fill="#fff" stroke="#000"/>
<path d="M5 5h1v1h-1zM4 6h1v1h-1zM3 7h1v1h-1zM3 8h1v1h-1zM3 9h1v1h-1zM3 10h1v1h-1zM3 11h1v1h-1zM4 12h1v1h-1zM5 13h1v1h-1zM6 13h1v1h-1zM7 12h1v1h-1zM8 7h1v1h-1zM8 8h1v1h-1zM8 9h1v1h-1zM8 10h1v1h-1zM8 11h1v1h-1zM9 12h1v1h-1zM10 13h1v1h-1zM11 13h1v1h-1zM12 12h1v1h-1zM13 7h1v1h-1zM13 8h1v1h-1zM13 9h1v1h-1zM13 10h1v1h-1zM13 11h1v1h-1zM12 6h1v1h-1zM11 5h1v1h-1z" fill="#000"/></svg>
<div class="t g" style="left:74px;top:410px;color:#000;">Hydraulic Conductivity</div>
<div style="position:absolute;left:209px;top:406px;width:130px;height:20px;box-sizing:border-box;background:#fff;border:1px solid #a5a9b0"></div>
<div class="t" style="right:411px;top:411px;color:#000;">300.00</div>
<div class="t " style="left:342px;top:410px;color:#000;letter-spacing:-0.25px">cm/day</div>
<svg style="position:absolute;left:52px;top:428px" width="18" height="18" viewBox="0 0 18 18" shape-rendering="crispEdges">
<rect x="0.5" y="0.5" width="17" height="17" fill="none" stroke="#c4c4c4"/>
<rect x="1.5" y="1.5" width="15" height="15" fill="#fff" stroke="#000"/>
<path d="M5 5h1v1h-1zM4 6h1v1h-1zM3 7h1v1h-1zM3 8h1v1h-1zM3 9h1v1h-1zM3 10h1v1h-1zM3 11h1v1h-1zM4 12h1v1h-1zM5 13h1v1h-1zM6 13h1v1h-1zM7 12h1v1h-1zM8 7h1v1h-1zM8 8h1v1h-1zM8 9h1v1h-1zM8 10h1v1h-1zM8 11h1v1h-1zM9 12h1v1h-1zM10 13h1v1h-1zM11 13h1v1h-1zM12 12h1v1h-1zM13 7h1v1h-1zM13 8h1v1h-1zM13 9h1v1h-1zM13 10h1v1h-1zM13 11h1v1h-1zM12 6h1v1h-1zM11 5h1v1h-1z" fill="#000"/></svg>
<div class="t g" style="left:74px;top:431px;color:#000;">Specific Yield</div>
<div style="position:absolute;left:209px;top:427px;width:130px;height:20px;box-sizing:border-box;background:#fff;border:1px solid #a5a9b0"></div>
<div class="t" style="right:411px;top:432px;color:#000;">0.20</div>
<div class="t " style="left:342px;top:431px;color:#000;letter-spacing:-0.9px">NONE</div>
<svg style="position:absolute;left:391px;top:276px" width="17" height="17" viewBox="0 0 17 17">
<rect x="0.5" y="0.5" width="16" height="16" fill="#8fbdee" stroke="#a3a3a3"/>
<g fill="#a95c1e"><ellipse cx="2.1" cy="2.1" rx="1.26" ry="1.14"/><ellipse cx="5.1" cy="1.9" rx="1.14" ry="0.92"/><ellipse cx="4.1" cy="4.9" rx="1.60" ry="1.94"/><ellipse cx="7.7" cy="3.8" rx="1.72" ry="1.72"/><ellipse cx="9.0" cy="2.4" rx="1.14" ry="1.14"/><ellipse cx="11.9" cy="1.9" rx="1.14" ry="0.92"/><ellipse cx="15.3" cy="3.0" rx="1.49" ry="1.94"/><ellipse cx="11.5" cy="5.2" rx="1.60" ry="1.37"/><ellipse cx="2.0" cy="7.5" rx="0.92" ry="1.49"/><ellipse cx="8.0" cy="7.7" rx="1.83" ry="1.37"/><ellipse cx="14.6" cy="7.5" rx="1.94" ry="1.14"/><ellipse cx="4.4" cy="9.0" rx="1.14" ry="0.92"/><ellipse cx="10.0" cy="9.7" rx="0.92" ry="0.92"/><ellipse cx="1.9" cy="11.1" rx="0.80" ry="0.92"/><ellipse cx="5.9" cy="11.5" rx="2.40" ry="1.14"/><ellipse cx="13.3" cy="10.8" rx="1.94" ry="1.49"/><ellipse cx="10.2" cy="13.0" rx="1.49" ry="1.60"/><ellipse cx="16.0" cy="12.3" rx="0.92" ry="1.14"/><ellipse cx="2.4" cy="15.1" rx="1.37" ry="1.60"/><ellipse cx="6.8" cy="15.0" rx="1.49" ry="1.60"/><ellipse cx="13.9" cy="14.5" rx="1.94" ry="1.14"/><ellipse cx="10.8" cy="15.8" rx="1.03" ry="0.69"/></g>
<rect x="0.5" y="0.5" width="16" height="16" fill="none" stroke="#a3a3a3"/></svg>
<div class="t " style="left:411px;top:280px;color:#000;">Linden Aquifer</div>
<div style="position:absolute;left:671px;top:276px;width:22px;height:18px;box-sizing:border-box;background:linear-gradient(#dcecfc,#c4e0fc);border:1px solid #5ea0e6"></div>
<svg style="position:absolute;left:671px;top:276px" width="22" height="18" viewBox="0 0 22 18">
<path d="M2 4 L8.2 9.5 L2 15 Z M20 4 L13.8 9.5 L20 15 Z" fill="#000"/><rect x="10" y="4" width="2" height="11" fill="#000"/></svg>
<svg style="position:absolute;left:399px;top:302px" width="18" height="18" viewBox="0 0 18 18" shape-rendering="crispEdges">
<rect x="0.5" y="0.5" width="17" height="17" fill="none" stroke="#c4c4c4"/>
<rect x="1.5" y="1.5" width="15" height="15" fill="#fff" stroke="#000"/>
<path d="M5 5h1v1h-1zM4 6h1v1h-1zM3 7h1v1h-1zM3 8h1v1h-1zM3 9h1v1h-1zM3 10h1v1h-1zM3 11h1v1h-1zM4 12h1v1h-1zM5 13h1v1h-1zM6 13h1v1h-1zM7 12h1v1h-1zM8 7h1v1h-1zM8 8h1v1h-1zM8 9h1v1h-1zM8 10h1v1h-1zM8 11h1v1h-1zM9 12h1v1h-1zM10 13h1v1h-1zM11 13h1v1h-1zM12 12h1v1h-1zM13 7h1v1h-1zM13 8h1v1h-1zM13 9h1v1h-1zM13 10h1v1h-1zM13 11h1v1h-1zM12 6h1v1h-1zM11 5h1v1h-1z" fill="#000"/></svg>
<div class="t g" style="left:421px;top:305px;color:#000;">Area</div>
<div style="position:absolute;left:524px;top:301px;width:130px;height:20px;box-sizing:border-box;background:#fff;border:1px solid #a5a9b0"></div>
<div class="t" style="right:96px;top:306px;color:#000;">NaN</div>
<div class="t " style="left:657px;top:305px;color:#000;">ha</div>
<svg style="position:absolute;left:399px;top:323px" width="18" height="18" viewBox="0 0 18 18" shape-rendering="crispEdges">
<rect x="0.5" y="0.5" width="17" height="17" fill="none" stroke="#c4c4c4"/>
<rect x="1.5" y="1.5" width="15" height="15" fill="#fff" stroke="#000"/>
<path d="M5 5h1v1h-1zM4 6h1v1h-1zM3 7h1v1h-1zM3 8h1v1h-1zM3 9h1v1h-1zM3 10h1v1h-1zM3 11h1v1h-1zM4 12h1v1h-1zM5 13h1v1h-1zM6 13h1v1h-1zM7 12h1v1h-1zM8 7h1v1h-1zM8 8h1v1h-1zM8 9h1v1h-1zM8 10h1v1h-1zM8 11h1v1h-1zM9 12h1v1h-1zM10 13h1v1h-1zM11 13h1v1h-1zM12 12h1v1h-1zM13 7h1v1h-1zM13 8h1v1h-1zM13 9h1v1h-1zM13 10h1v1h-1zM13 11h1v1h-1zM12 6h1v1h-1zM11 5h1v1h-1z" fill="#000"/></svg>
<div class="t g" style="left:421px;top:326px;color:#000;">Comparison Criteria</div>
<div style="position:absolute;left:524px;top:322px;width:130px;height:20px;box-sizing:border-box;background:#fff;border:1px solid #a5a9b0"></div>
<div class="t" style="right:96px;top:327px;color:#000;">NaN</div>
<div class="t " style="left:657px;top:326px;color:#000;letter-spacing:-0.45px">decimal</div>
<svg style="position:absolute;left:399px;top:344px" width="18" height="18" viewBox="0 0 18 18" shape-rendering="crispEdges">
<rect x="0.5" y="0.5" width="17" height="17" fill="none" stroke="#c4c4c4"/>
<rect x="1.5" y="1.5" width="15" height="15" fill="#fff" stroke="#000"/>
<path d="M5 5h1v1h-1zM4 6h1v1h-1zM3 7h1v1h-1zM3 8h1v1h-1zM3 9h1v1h-1zM3 10h1v1h-1zM3 11h1v1h-1zM4 12h1v1h-1zM5 13h1v1h-1zM6 13h1v1h-1zM7 12h1v1h-1zM8 7h1v1h-1zM8 8h1v1h-1zM8 9h1v1h-1zM8 10h1v1h-1zM8 11h1v1h-1zM9 12h1v1h-1zM10 13h1v1h-1zM11 13h1v1h-1zM12 12h1v1h-1zM13 7h1v1h-1zM13 8h1v1h-1zM13 9h1v1h-1zM13 10h1v1h-1zM13 11h1v1h-1zM12 6h1v1h-1zM11 5h1v1h-1z" fill="#000"/></svg>
<div class="t g" style="left:421px;top:347px;color:#000;">Storativity</div>
<div style="position:absolute;left:524px;top:343px;width:130px;height:20px;box-sizing:border-box;background:#fff;border:1px solid #a5a9b0"></div>
<div class="t" style="right:96px;top:348px;color:#000;">NaN</div>
<div class="t " style="left:657px;top:347px;color:#000;letter-spacing:-0.9px">NONE</div>
<svg style="position:absolute;left:44px;top:460px" width="17" height="17" viewBox="0 0 17 17">
<rect x="0.5" y="0.5" width="16" height="16" fill="#66612f" stroke="#a3a3a3"/>
<rect x="1" y="1" width="15" height="2" fill="#eef2ee"/>
<path d="M1 2.6 Q5 2.2 8.5 4 Q12 2.2 16 2.6 V5.2 H1 Z" fill="#5f9a58"/>
<path d="M7.7 3.2 H9.3 L10 5 H7 Z" fill="#eef2ee"/>
<ellipse cx="8.4" cy="8.6" rx="5.8" ry="4.3" fill="#3d3a4a"/>
<ellipse cx="8.4" cy="8.5" rx="5.2" ry="3.8" fill="#7f80df"/>
<path d="M7.3 4.6 L8.4 4 L9.5 4.6 L10 6 H6.8 Z" fill="#7f80ef"/></svg>
<div class="t " style="left:64px;top:464px;color:#000;">Mulberry Groundwater</div>
<div style="position:absolute;left:356px;top:460px;width:22px;height:18px;box-sizing:border-box;background:linear-gradient(#dcecfc,#c4e0fc);border:1px solid #5ea0e6"></div>
<svg style="position:absolute;left:356px;top:460px" width="22" height="18" viewBox="0 0 22 18">
<path d="M2 4 L8.2 9.5 L2 15 Z M20 4 L13.8 9.5 L20 15 Z" fill="#000"/><rect x="10" y="4" width="2" height="11" fill="#000"/></svg>
<svg style="position:absolute;left:52px;top:486px" width="18" height="18" viewBox="0 0 18 18" shape-rendering="crispEdges">
<rect x="0.5" y="0.5" width="17" height="17" fill="none" stroke="#c4c4c4"/>
<rect x="1.5" y="1.5" width="15" height="15" fill="#fff" stroke="#000"/>
<path d="M5 5h1v1h-1zM4 6h1v1h-1zM3 7h1v1h-1zM3 8h1v1h-1zM3 9h1v1h-1zM3 10h1v1h-1zM3 11h1v1h-1zM4 12h1v1h-1zM5 13h1v1h-1zM6 13h1v1h-1zM7 12h1v1h-1zM8 7h1v1h-1zM8 8h1v1h-1zM8 9h1v1h-1zM8 10h1v1h-1zM8 11h1v1h-1zM9 12h1v1h-1zM10 13h1v1h-1zM11 13h1v1h-1zM12 12h1v1h-1zM13 7h1v1h-1zM13 8h1v1h-1zM13 9h1v1h-1zM13 10h1v1h-1zM13 11h1v1h-1zM12 6h1v1h-1zM11 5h1v1h-1z" fill="#000"/></svg>
<div class="t g" style="left:74px;top:489px;color:#000;">Area</div>
<div style="position:absolute;left:195px;top:485px;width:144px;height:20px;box-sizing:border-box;background:#f0f0f0;border:1px solid #d9d9d9;box-shadow:inset 0 0 0 1px #fff"></div>
<div class="t" style="right:411px;top:490px;color:#8d8d8d;">9072.00</div>
<div class="t " style="left:342px;top:489px;color:#000;">ha</div>
<svg style="position:absolute;left:52px;top:507px" width="18" height="18" viewBox="0 0 18 18" shape-rendering="crispEdges">
<rect x="0.5" y="0.5" width="17" height="17" fill="none" stroke="#c4c4c4"/>
<rect x="1.5" y="1.5" width="15" height="15" fill="#fff" stroke="#000"/>
<path d="M5 5h1v1h-1zM4 6h1v1h-1zM3 7h1v1h-1zM3 8h1v1h-1zM3 9h1v1h-1zM3 10h1v1h-1zM3 11h1v1h-1zM4 12h1v1h-1zM5 13h1v1h-1zM6 13h1v1h-1zM7 12h1v1h-1zM8 7h1v1h-1zM8 8h1v1h-1zM8 9h1v1h-1zM8 10h1v1h-1zM8 11h1v1h-1zM9 12h1v1h-1zM10 13h1v1h-1zM11 13h1v1h-1zM12 12h1v1h-1zM13 7h1v1h-1zM13 8h1v1h-1zM13 9h1v1h-1zM13 10h1v1h-1zM13 11h1v1h-1zM12 6h1v1h-1zM11 5h1v1h-1z" fill="#000"/></svg>
<div class="t g" style="left:74px;top:510px;color:#000;">Length</div>
<div style="position:absolute;left:195px;top:506px;width:144px;height:20px;box-sizing:border-box;background:#fff;border:1px solid #a5a9b0"></div>
<div class="t" style="right:411px;top:511px;color:#000;">10500.00</div>
<div class="t " style="left:342px;top:510px;color:#000;">m</div>
<svg style="position:absolute;left:52px;top:528px" width="18" height="18" viewBox="0 0 18 18" shape-rendering="crispEdges">
<rect x="0.5" y="0.5" width="17" height="17" fill="none" stroke="#c4c4c4"/>
<rect x="1.5" y="1.5" width="15" height="15" fill="#fff" stroke="#000"/>
<path d="M5 5h1v1h-1zM4 6h1v1h-1zM3 7h1v1h-1zM3 8h1v1h-1zM3 9h1v1h-1zM3 10h1v1h-1zM3 11h1v1h-1zM4 12h1v1h-1zM5 13h1v1h-1zM6 13h1v1h-1zM7 12h1v1h-1zM8 7h1v1h-1zM8 8h1v1h-1zM8 9h1v1h-1zM8 10h1v1h-1zM8 11h1v1h-1zM9 12h1v1h-1zM10 13h1v1h-1zM11 13h1v1h-1zM12 12h1v1h-1zM13 7h1v1h-1zM13 8h1v1h-1zM13 9h1v1h-1zM13 10h1v1h-1zM13 11h1v1h-1zM12 6h1v1h-1zM11 5h1v1h-1z" fill="#000"/></svg>
<div class="t g" style="left:74px;top:531px;color:#000;">Thickness</div>
<div style="position:absolute;left:195px;top:527px;width:144px;height:20px;box-sizing:border-box;background:#fff;border:1px solid #a5a9b0"></div>
<div class="t" style="right:411px;top:532px;color:#000;">40.00</div>
<div class="t " style="left:342px;top:531px;color:#000;">m</div>
<svg style="position:absolute;left:52px;top:549px" width="18" height="18" viewBox="0 0 18 18" shape-rendering="crispEdges">
<rect x="0.5" y="0.5" width="17" height="17" fill="none" stroke="#c4c4c4"/>
<rect x="1.5" y="1.5" width="15" height="15" fill="#fff" stroke="#000"/>
<path d="M5 5h1v1h-1zM4 6h1v1h-1zM3 7h1v1h-1zM3 8h1v1h-1zM3 9h1v1h-1zM3 10h1v1h-1zM3 11h1v1h-1zM4 12h1v1h-1zM5 13h1v1h-1zM6 13h1v1h-1zM7 12h1v1h-1zM8 7h1v1h-1zM8 8h1v1h-1zM8 9h1v1h-1zM8 10h1v1h-1zM8 11h1v1h-1zM9 12h1v1h-1zM10 13h1v1h-1zM11 13h1v1h-1zM12 12h1v1h-1zM13 7h1v1h-1zM13 8h1v1h-1zM13 9h1v1h-1zM13 10h1v1h-1zM13 11h1v1h-1zM12 6h1v1h-1zM11 5h1v1h-1z" fill="#000"/></svg>
<div class="t g" style="left:74px;top:552px;color:#000;">Width</div>
<div style="position:absolute;left:195px;top:548px;width:144px;height:20px;box-sizing:border-box;background:#fff;border:1px solid #a5a9b0"></div>
<div class="t" style="right:411px;top:553px;color:#000;">8640.00</div>
<div class="t " style="left:342px;top:552px;color:#000;">m</div>
<svg style="position:absolute;left:52px;top:570px" width="18" height="18" viewBox="0 0 18 18" shape-rendering="crispEdges">
<rect x="0.5" y="0.5" width="17" height="17" fill="none" stroke="#c4c4c4"/>
<rect x="1.5" y="1.5" width="15" height="15" fill="#fff" stroke="#000"/>
<path d="M5 5h1v1h-1zM4 6h1v1h-1zM3 7h1v1h-1zM3 8h1v1h-1zM3 9h1v1h-1zM3 10h1v1h-1zM3 11h1v1h-1zM4 12h1v1h-1zM5 13h1v1h-1zM6 13h1v1h-1zM7 12h1v1h-1zM8 7h1v1h-1zM8 8h1v1h-1zM8 9h1v1h-1zM8 10h1v1h-1zM8 11h1v1h-1zM9 12h1v1h-1zM10 13h1v1h-1zM11 13h1v1h-1zM12 12h1v1h-1zM13 7h1v1h-1zM13 8h1v1h-1zM13 9h1v1h-1zM13 10h1v1h-1zM13 11h1v1h-1zM12 6h1v1h-1zM11 5h1v1h-1z" fill="#000"/></svg>
<div class="t g" style="left:74px;top:573px;color:#000;">Conductance Upstream</div>
<div style="position:absolute;left:195px;top:569px;width:144px;height:20px;box-sizing:border-box;background:#f0f0f0;border:1px solid #d9d9d9;box-shadow:inset 0 0 0 1px #fff"></div>
<div class="t" style="right:411px;top:574px;color:#8d8d8d;">0.00106</div>
<div class="t " style="left:342px;top:573px;color:#000;">m2/s</div>
<svg style="position:absolute;left:52px;top:591px" width="18" height="18" viewBox="0 0 18 18" shape-rendering="crispEdges">
<rect x="0.5" y="0.5" width="17" height="17" fill="none" stroke="#c4c4c4"/>
<rect x="1.5" y="1.5" width="15" height="15" fill="#fff" stroke="#000"/>
<path d="M5 5h1v1h-1zM4 6h1v1h-1zM3 7h1v1h-1zM3 8h1v1h-1zM3 9h1v1h-1zM3 10h1v1h-1zM3 11h1v1h-1zM4 12h1v1h-1zM5 13h1v1h-1zM6 13h1v1h-1zM7 12h1v1h-1zM8 7h1v1h-1zM8 8h1v1h-1zM8 9h1v1h-1zM8 10h1v1h-1zM8 11h1v1h-1zM9 12h1v1h-1zM10 13h1v1h-1zM11 13h1v1h-1zM12 12h1v1h-1zM13 7h1v1h-1zM13 8h1v1h-1zM13 9h1v1h-1zM13 10h1v1h-1zM13 11h1v1h-1zM12 6h1v1h-1zM11 5h1v1h-1z" fill="#000"/></svg>
<div class="t g" style="left:74px;top:594px;color:#000;">Hydraulic Conductivity</div>
<div style="position:absolute;left:195px;top:590px;width:144px;height:20px;box-sizing:border-box;background:#fff;border:1px solid #a5a9b0"></div>
<div class="t" style="right:411px;top:595px;color:#000;">300.00</div>
<div class="t " style="left:342px;top:594px;color:#000;letter-spacing:-0.25px">cm/day</div>
<svg style="position:absolute;left:52px;top:612px" width="18" height="18" viewBox="0 0 18 18" shape-rendering="crispEdges">
<rect x="0.5" y="0.5" width="17" height="17" fill="none" stroke="#c4c4c4"/>
<rect x="1.5" y="1.5" width="15" height="15" fill="#fff" stroke="#000"/>
<path d="M5 5h1v1h-1zM4 6h1v1h-1zM3 7h1v1h-1zM3 8h1v1h-1zM3 9h1v1h-1zM3 10h1v1h-1zM3 11h1v1h-1zM4 12h1v1h-1zM5 13h1v1h-1zM6 13h1v1h-1zM7 12h1v1h-1zM8 7h1v1h-1zM8 8h1v1h-1zM8 9h1v1h-1zM8 10h1v1h-1zM8 11h1v1h-1zM9 12h1v1h-1zM10 13h1v1h-1zM11 13h1v1h-1zM12 12h1v1h-1zM13 7h1v1h-1zM13 8h1v1h-1zM13 9h1v1h-1zM13 10h1v1h-1zM13 11h1v1h-1zM12 6h1v1h-1zM11 5h1v1h-1z" fill="#000"/></svg>
<div class="t g" style="left:74px;top:615px;color:#000;">Specific Yield</div>
<div style="position:absolute;left:195px;top:611px;width:144px;height:20px;box-sizing:border-box;background:#fff;border:1px solid #a5a9b0"></div>
<div class="t" style="right:411px;top:616px;color:#000;">0.20</div>
<div class="t " style="left:342px;top:615px;color:#000;letter-spacing:-0.9px">NONE</div>
<svg style="position:absolute;left:52px;top:633px" width="18" height="18" viewBox="0 0 18 18" shape-rendering="crispEdges">
<rect x="0.5" y="0.5" width="17" height="17" fill="none" stroke="#c4c4c4"/>
<rect x="1.5" y="1.5" width="15" height="15" fill="#fff" stroke="#000"/>
<path d="M5 5h1v1h-1zM4 6h1v1h-1zM3 7h1v1h-1zM3 8h1v1h-1zM3 9h1v1h-1zM3 10h1v1h-1zM3 11h1v1h-1zM4 12h1v1h-1zM5 13h1v1h-1zM6 13h1v1h-1zM7 12h1v1h-1zM8 7h1v1h-1zM8 8h1v1h-1zM8 9h1v1h-1zM8 10h1v1h-1zM8 11h1v1h-1zM9 12h1v1h-1zM10 13h1v1h-1zM11 13h1v1h-1zM12 12h1v1h-1zM13 7h1v1h-1zM13 8h1v1h-1zM13 9h1v1h-1zM13 10h1v1h-1zM13 11h1v1h-1zM12 6h1v1h-1zM11 5h1v1h-1z" fill="#000"/></svg>
<div class="t g" style="left:74px;top:636px;color:#000;">Anisotropy Ratio</div>
<div style="position:absolute;left:195px;top:632px;width:144px;height:20px;box-sizing:border-box;background:#fff;border:1px solid #a5a9b0"></div>
<div class="t" style="right:411px;top:637px;color:#000;">1.00</div>
<div class="t " style="left:342px;top:636px;color:#000;letter-spacing:-0.9px">NONE</div>
<svg style="position:absolute;left:391px;top:460px" width="17" height="17" viewBox="0 0 17 17">
<rect x="0.5" y="0.5" width="16" height="16" fill="#8fbdee" stroke="#a3a3a3"/>
<g fill="#a95c1e"><ellipse cx="2.1" cy="2.1" rx="1.26" ry="1.14"/><ellipse cx="5.1" cy="1.9" rx="1.14" ry="0.92"/><ellipse cx="4.1" cy="4.9" rx="1.60" ry="1.94"/><ellipse cx="7.7" cy="3.8" rx="1.72" ry="1.72"/><ellipse cx="9.0" cy="2.4" rx="1.14" ry="1.14"/><ellipse cx="11.9" cy="1.9" rx="1.14" ry="0.92"/><ellipse cx="15.3" cy="3.0" rx="1.49" ry="1.94"/><ellipse cx="11.5" cy="5.2" rx="1.60" ry="1.37"/><ellipse cx="2.0" cy="7.5" rx="0.92" ry="1.49"/><ellipse cx="8.0" cy="7.7" rx="1.83" ry="1.37"/><ellipse cx="14.6" cy="7.5" rx="1.94" ry="1.14"/><ellipse cx="4.4" cy="9.0" rx="1.14" ry="0.92"/><ellipse cx="10.0" cy="9.7" rx="0.92" ry="0.92"/><ellipse cx="1.9" cy="11.1" rx="0.80" ry="0.92"/><ellipse cx="5.9" cy="11.5" rx="2.40" ry="1.14"/><ellipse cx="13.3" cy="10.8" rx="1.94" ry="1.49"/><ellipse cx="10.2" cy="13.0" rx="1.49" ry="1.60"/><ellipse cx="16.0" cy="12.3" rx="0.92" ry="1.14"/><ellipse cx="2.4" cy="15.1" rx="1.37" ry="1.60"/><ellipse cx="6.8" cy="15.0" rx="1.49" ry="1.60"/><ellipse cx="13.9" cy="14.5" rx="1.94" ry="1.14"/><ellipse cx="10.8" cy="15.8" rx="1.03" ry="0.69"/></g>
<rect x="0.5" y="0.5" width="16" height="16" fill="none" stroke="#a3a3a3"/></svg>
<div class="t " style="left:411px;top:464px;color:#000;">Mulberry Aquifer</div>
<div style="position:absolute;left:671px;top:460px;width:22px;height:18px;box-sizing:border-box;background:linear-gradient(#dcecfc,#c4e0fc);border:1px solid #5ea0e6"></div>
<svg style="position:absolute;left:671px;top:460px" width="22" height="18" viewBox="0 0 22 18">
<path d="M2 4 L8.2 9.5 L2 15 Z M20 4 L13.8 9.5 L20 15 Z" fill="#000"/><rect x="10" y="4" width="2" height="11" fill="#000"/></svg>
<svg style="position:absolute;left:399px;top:486px" width="18" height="18" viewBox="0 0 18 18" shape-rendering="crispEdges">
<rect x="0.5" y="0.5" width="17" height="17" fill="none" stroke="#c4c4c4"/>
<rect x="1.5" y="1.5" width="15" height="15" fill="#fff" stroke="#000"/>
<path d="M5 5h1v1h-1zM4 6h1v1h-1zM3 7h1v1h-1zM3 8h1v1h-1zM3 9h1v1h-1zM3 10h1v1h-1zM3 11h1v1h-1zM4 12h1v1h-1zM5 13h1v1h-1zM6 13h1v1h-1zM7 12h1v1h-1zM8 7h1v1h-1zM8 8h1v1h-1zM8 9h1v1h-1zM8 10h1v1h-1zM8 11h1v1h-1zM9 12h1v1h-1zM10 13h1v1h-1zM11 13h1v1h-1zM12 12h1v1h-1zM13 7h1v1h-1zM13 8h1v1h-1zM13 9h1v1h-1zM13 10h1v1h-1zM13 11h1v1h-1zM12 6h1v1h-1zM11 5h1v1h-1z" fill="#000"/></svg>
<div class="t g" style="left:421px;top:489px;color:#000;">Area</div>
<div style="position:absolute;left:524px;top:485px;width:130px;height:20px;box-sizing:border-box;background:#fff;border:1px solid #a5a9b0"></div>
<div class="t" style="right:96px;top:490px;color:#000;">NaN</div>
<div class="t " style="left:657px;top:489px;color:#000;">ha</div>
<svg style="position:absolute;left:399px;top:507px" width="18" height="18" viewBox="0 0 18 18" shape-rendering="crispEdges">
<rect x="0.5" y="0.5" width="17" height="17" fill="none" stroke="#c4c4c4"/>
<rect x="1.5" y="1.5" width="15" height="15" fill="#fff" stroke="#000"/>
<path d="M5 5h1v1h-1zM4 6h1v1h-1zM3 7h1v1h-1zM3 8h1v1h-1zM3 9h1v1h-1zM3 10h1v1h-1zM3 11h1v1h-1zM4 12h1v1h-1zM5 13h1v1h-1zM6 13h1v1h-1zM7 12h1v1h-1zM8 7h1v1h-1zM8 8h1v1h-1zM8 9h1v1h-1zM8 10h1v1h-1zM8 11h1v1h-1zM9 12h1v1h-1zM10 13h1v1h-1zM11 13h1v1h-1zM12 12h1v1h-1zM13 7h1v1h-1zM13 8h1v1h-1zM13 9h1v1h-1zM13 10h1v1h-1zM13 11h1v1h-1zM12 6h1v1h-1zM11 5h1v1h-1z" fill="#000"/></svg>
<div class="t g" style="left:421px;top:510px;color:#000;">Comparison Criteria</div>
<div style="position:absolute;left:524px;top:506px;width:130px;height:20px;box-sizing:border-box;background:#fff;border:1px solid #a5a9b0"></div>
<div class="t" style="right:96px;top:511px;color:#000;">NaN</div>
<div class="t " style="left:657px;top:510px;color:#000;letter-spacing:-0.45px">decimal</div>
<svg style="position:absolute;left:399px;top:528px" width="18" height="18" viewBox="0 0 18 18" shape-rendering="crispEdges">
<rect x="0.5" y="0.5" width="17" height="17" fill="none" stroke="#c4c4c4"/>
<rect x="1.5" y="1.5" width="15" height="15" fill="#fff" stroke="#000"/>
<path d="M5 5h1v1h-1zM4 6h1v1h-1zM3 7h1v1h-1zM3 8h1v1h-1zM3 9h1v1h-1zM3 10h1v1h-1zM3 11h1v1h-1zM4 12h1v1h-1zM5 13h1v1h-1zM6 13h1v1h-1zM7 12h1v1h-1zM8 7h1v1h-1zM8 8h1v1h-1zM8 9h1v1h-1zM8 10h1v1h-1zM8 11h1v1h-1zM9 12h1v1h-1zM10 13h1v1h-1zM11 13h1v1h-1zM12 12h1v1h-1zM13 7h1v1h-1zM13 8h1v1h-1zM13 9h1v1h-1zM13 10h1v1h-1zM13 11h1v1h-1zM12 6h1v1h-1zM11 5h1v1h-1z" fill="#000"/></svg>
<div class="t g" style="left:421px;top:531px;color:#000;">Storativity</div>
<div style="position:absolute;left:524px;top:527px;width:130px;height:20px;box-sizing:border-box;background:#fff;border:1px solid #a5a9b0"></div>
<div class="t" style="right:96px;top:532px;color:#000;">NaN</div>
<div class="t " style="left:657px;top:531px;color:#000;letter-spacing:-0.9px">NONE</div>
<div style="position:absolute;left:24px;top:678px;width:13px;height:13px;box-sizing:border-box;background:#fff;border:1px solid #707070"></div>
<div class="t " style="left:41px;top:679px;color:#000;letter-spacing:-0.25px">Full Precision</div>
<div style="position:absolute;left:118px;top:678px;width:13px;height:13px;box-sizing:border-box;background:#fff;border:1px solid #707070"></div>
<svg style="position:absolute;left:118px;top:678px" width="13" height="13" viewBox="0 0 13 13"><path d="M2.6 6.2 L5.6 9.2 L10.7 3" stroke="#000" stroke-width="2.1" fill="none"/></svg>
<div class="t " style="left:135px;top:679px;color:#000;letter-spacing:-0.24px">Show Units</div>
<div class="t " style="left:204px;top:680px;color:#000;letter-spacing:-0.08px">Value Editor Width:</div>
<div style="position:absolute;left:302px;top:675px;width:37px;height:20px;box-sizing:border-box;background:#fff;border:1px solid #acacac"></div>
<div class="t " style="left:305px;top:680px;color:#000;">12</div>
<div style="position:absolute;left:323px;top:677px;width:14px;height:9px;box-sizing:border-box;background:#e8e8e8;border:1px solid #bcbcbc"></div>
<div style="position:absolute;left:323px;top:685px;width:14px;height:8px;box-sizing:border-box;background:#e8e8e8;border:1px solid #bcbcbc"></div>
<svg style="position:absolute;left:323px;top:675px" width="14" height="20"><path d="M3.8 7.9 L6.9 5 L10 7.9 Z M3.8 12 L10 12 L6.9 15 Z" fill="#000"/></svg>
</body></html>
